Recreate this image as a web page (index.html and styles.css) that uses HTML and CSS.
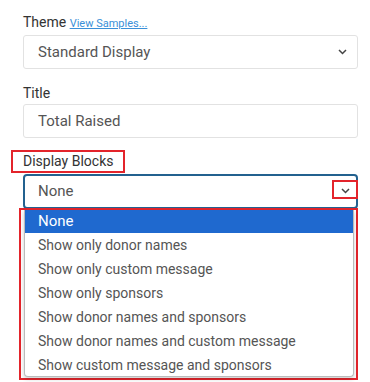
FILE: index.html
```html
<!DOCTYPE html>
<html lang="en">
<head>
  <meta charset="UTF-8">
  <title>Display Blocks</title>
  <link rel="stylesheet" href="styles.css">
</head>
<body>
  <form class="settings">
    <!-- theme -->
    <div class="field">
      <label class="label">Theme <a href="#" class="samples">View Samples...</a></label>
      <div class="select">
        <span>Standard Display</span>
        <svg class="chevron" width="9" height="6" viewBox="0 0 9 6"><path d="M1 1l3.5 3.5 3.5-3.5" fill="none" stroke="#444" stroke-width="1.5"/></svg>
      </div>
    </div>

    <!-- title -->
    <div class="field">
      <label class="label">Title</label>
      <div class="input">Total Raised</div>
    </div>

    <!-- display blocks, open -->
    <div class="field blocks">
      <label class="label marked">Display Blocks</label>
      <div class="select focused">
        <span>None</span>
        <span class="chevron-mark">
          <svg class="chevron" width="9" height="6" viewBox="0 0 9 6"><path d="M1 1l3.5 3.5 3.5-3.5" fill="none" stroke="#444" stroke-width="1.5"/></svg>
        </span>
      </div>
      <div class="menu-mark">
        <ul class="menu">
          <li class="active">None</li>
          <li>Show only donor names</li>
          <li>Show only custom message</li>
          <li>Show only sponsors</li>
          <li>Show donor names and sponsors</li>
          <li>Show donor names and custom message</li>
          <li>Show custom message and sponsors</li>
        </ul>
      </div>
    </div>
  </form>
</body>
</html>
```

FILE: styles.css
```css
* {
  margin: 0;
  padding: 0;
  box-sizing: border-box;
}
body {
  font-family: 'Roboto', 'Liberation Sans', sans-serif;
  background: #fff;
  color: #333;
}

.settings {
  width: 370px;
  padding: 13px 12px 0 23px;
}

.field {
  margin-bottom: 15px;
}
.label {
  display: block;
  font-size: 14px;
  line-height: 18px;
  color: #333;
  margin-bottom: 2px;
}
.samples {
  font-size: 11px;
  color: #3a8fd8;
  text-decoration: underline;
}

/* select + input */
.select,
.input {
  height: 34px;
  border: 1px solid #e2e2e2;
  border-radius: 3px;
  padding: 0 10px 0 14px;
  font-size: 15px;
  color: #555;
  display: flex;
  align-items: center;
  justify-content: space-between;
}
.select .chevron {
  display: block;
}
.select.focused {
  border: 2px solid #23618f;
  border-radius: 4px;
  padding: 0 0 0 13px;
  height: 35px;
  align-items: flex-start;
}
.select.focused span:first-child {
  line-height: 31px;
}

/* red annotation boxes */
.blocks {
  margin-top: -3px;
}
.marked {
  width: fit-content;
  border: 2px solid #e3242b;
  margin-left: -12px;
  padding: 0 10px;
  line-height: 19px;
  margin-bottom: 1px;
}
.chevron-mark {
  width: 26px;
  height: 19px;
  border: 2px solid #e3242b;
  display: flex;
  align-items: center;
  justify-content: center;
  margin-top: 4px;
  margin-right: -2px;
  padding-top: 2px;
}
.menu-mark {
  border: 2px solid #e3242b;
  margin-left: -4px;
  margin-top: -1px;
  width: 339px;
  height: 172px;
  padding: 0 2px 0 3px;
}

/* dropdown list */
.menu {
  list-style: none;
  border: 1px solid #bbb;
  border-top: none;
  border-radius: 0 0 4px 4px;
  box-shadow: 0 2px 4px rgba(0,0,0,0.2);
  background: #fff;
  height: 167px;
  overflow: hidden;
}
.menu li {
  font-size: 14px;
  line-height: 24px;
  color: #555;
  padding-left: 13px;
}
.menu li.active {
  background: #1f69cf;
  color: #fff;
  font-size: 15px;
  line-height: 23px;
}
```
